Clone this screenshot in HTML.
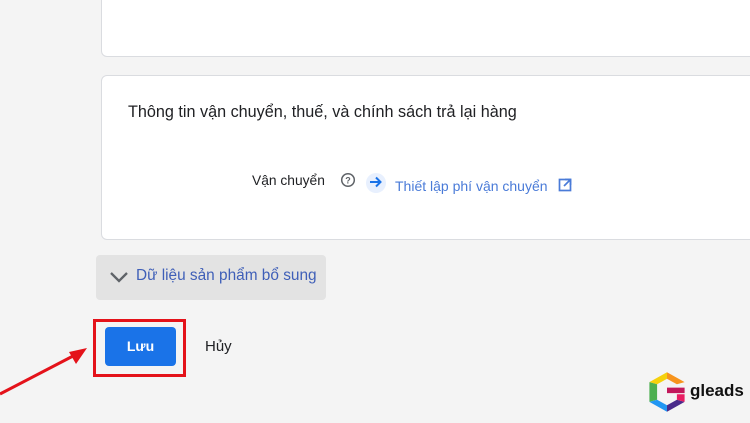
<!DOCTYPE html>
<html><head><meta charset="utf-8"><style>
body{margin:0;width:750px;height:423px;background:#f4f4f4;position:relative;overflow:hidden;font-family:"Liberation Sans","Noto Sans CJK JP",sans-serif;}
.card{position:absolute;left:101px;width:700px;background:#fff;border:1px solid #dadce0;border-radius:6px;box-sizing:border-box;}
.t{position:absolute;white-space:nowrap;}
</style></head><body>
<div class="card" style="top:-10px;height:67px"></div>
<div class="card" style="top:75px;height:165px"></div>
<div class="t" style="left:128px;top:103px;font-size:16.2px;color:#202124">Thông tin vận chuyển, thuế, và chính sách trả lại hàng</div>
<div class="t" style="left:252px;top:173px;font-size:13.8px;color:#202124">Vận chuyển</div>
<svg style="position:absolute;left:340px;top:172px" width="16" height="16" viewBox="0 0 16 16"><circle cx="8" cy="8" r="6.3" fill="none" stroke="#5f6368" stroke-width="1.5"/><text x="8" y="11.5" font-size="9" font-weight="bold" text-anchor="middle" fill="#5f6368" font-family="Liberation Sans">?</text></svg>
<svg style="position:absolute;left:365px;top:172px" width="22" height="22" viewBox="0 0 22 22"><circle cx="11" cy="11" r="10" fill="#e8f0fe"/><path d="M5 10h10M11 5.5l4.5 4.5L11 14.5" fill="none" stroke="#1a73e8" stroke-width="2"/></svg>
<div class="t" style="left:395px;top:178px;font-size:14px;color:#4a7bd8">Thiết lập phí vận chuyển</div>
<svg style="position:absolute;left:558px;top:178px" width="14" height="14" viewBox="0 0 14 14"><rect x="1.5" y="1.5" width="11" height="11" fill="none" stroke="#4a7bd8" stroke-width="1.7"/><path d="M7 1.5h5.5V7" fill="none" stroke="#4a7bd8" stroke-width="1.7"/><path d="M12.5 1.5L6 8" stroke="#4a7bd8" stroke-width="1.7"/><rect x="7" y="0" width="7" height="7" fill="#fff" opacity="0"/></svg>
<div style="position:absolute;left:96px;top:255px;width:230px;height:45px;background:#e3e3e3;border-radius:4px"></div>
<svg style="position:absolute;left:109px;top:270px" width="20" height="14" viewBox="0 0 20 14"><path d="M2 3l8 8 8-8" fill="none" stroke="#5f6368" stroke-width="2.3"/></svg>
<div class="t" style="left:136px;top:267px;font-size:15.4px;color:#3f5fb8">Dữ liệu sản phẩm bổ sung</div>
<div style="position:absolute;left:93px;top:319px;width:93px;height:58px;border:3px solid #e4121a;box-sizing:border-box"></div>
<div style="position:absolute;left:105px;top:327px;width:71px;height:39px;background:#1a73e8;border-radius:4px;color:#fff;font-size:14px;font-weight:bold;text-align:center;line-height:39px">Lưu</div>
<div class="t" style="left:205px;top:338px;font-size:15px;color:#202124">Hủy</div>
<svg style="position:absolute;left:0;top:340px" width="100" height="70"><path d="M0 54L75 15" stroke="#e4121a" stroke-width="3"/><path d="M87 8L69 12L76 24Z" fill="#e4121a"/></svg>
<svg style="position:absolute;left:645px;top:370px" width="44" height="44" viewBox="0 0 40 40">
<path d="M20 2L36 11L29 13L20 8Z" fill="#f7941d"/><path d="M20 2L4 11L11 13L20 8Z" fill="#f5d10c"/>
<path d="M4 11V29L11 27V13Z" fill="#4caf50"/><path d="M4 29L20 38V32L11 27Z" fill="#2196f3"/>
<path d="M20 38L36 29L29 27L20 32Z" fill="#4a2a8a"/><path d="M36 29V22H29V27Z" fill="#e91e63"/><path d="M20 16H36V21H20Z" fill="#c2185b"/></svg>
<div class="t" style="left:690px;top:381px;font-size:17px;font-weight:bold;color:#111">gleads</div>
</body></html>
